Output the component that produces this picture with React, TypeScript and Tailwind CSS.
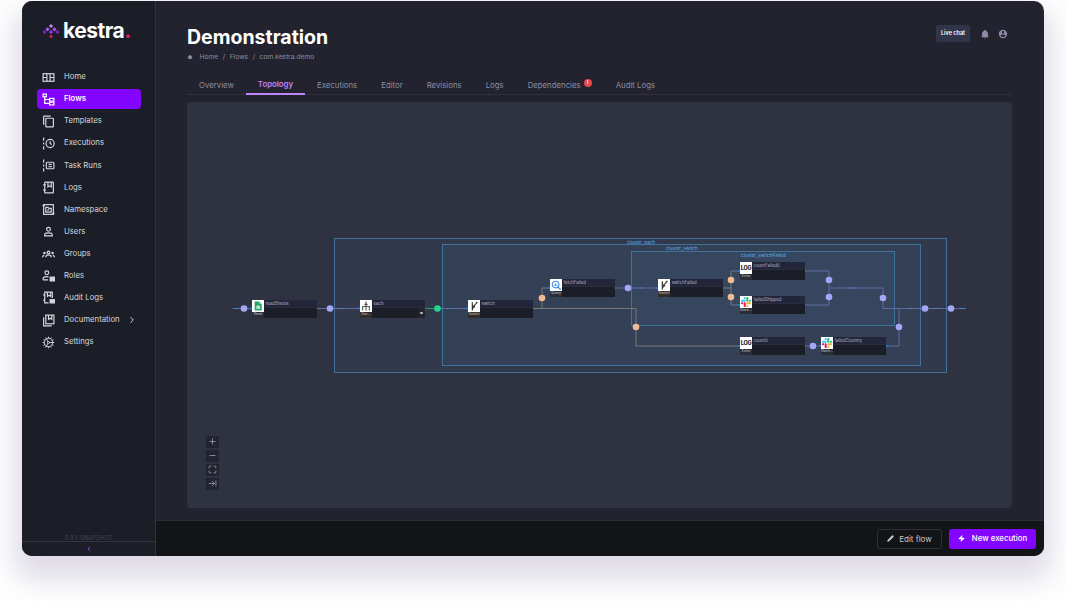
import { ChevronLeft, ChevronRight, Cog, Maximize, Minus, Plus, ArrowRightToLine, Pencil, Zap } from "lucide-react";
import type { ReactNode } from "react";

const Ico = ({ children }: { children: ReactNode }) => (
  <svg viewBox="0 0 24 24" className="h-[13px] w-[13px]" fill="none" stroke="currentColor" strokeWidth="2.2">
    {children}
  </svg>
);

const navItems: { label: string; icon: ReactNode; active?: boolean; arrow?: boolean }[] = [
  {
    label: "Home",
    icon: (
      <Ico>
        <rect x="2" y="5" width="20" height="14" />
        <path d="M9 5v14M15 5v14M15 12h7M2 12h7" />
      </Ico>
    ),
  },
  {
    label: "Flows",
    active: true,
    icon: (
      <Ico>
        <rect x="2" y="2" width="6" height="5" />
        <rect x="14" y="10" width="8" height="5" />
        <rect x="14" y="17" width="8" height="5" />
        <path d="M5 7v12h9M5 12h9" />
      </Ico>
    ),
  },
  {
    label: "Templates",
    icon: (
      <Ico>
        <path d="M16 2H4a1 1 0 0 0-1 1v15" />
        <rect x="7" y="6" width="14" height="16" rx="1" />
      </Ico>
    ),
  },
  {
    label: "Executions",
    icon: (
      <Ico>
        <circle cx="15" cy="12" r="7.5" />
        <path d="M15 8v4l3 2M3 1v6M3 10v4M3 17v6" />
      </Ico>
    ),
  },
  {
    label: "Task Runs",
    icon: (
      <Ico>
        <rect x="8" y="6" width="14" height="12" rx="2" />
        <path d="M12 10h6M12 14h6M3 1v6M3 10v4M3 17v6" />
      </Ico>
    ),
  },
  {
    label: "Logs",
    icon: (
      <Ico>
        <rect x="5" y="2" width="16" height="20" rx="1" />
        <path d="M11 2v9l3-2 3 2V2M2 7h5M2 17h5" />
      </Ico>
    ),
  },
  {
    label: "Namespace",
    icon: (
      <Ico>
        <rect x="3" y="3" width="18" height="18" />
        <path d="M7 8h4l2 2h4v7H7zM1 5h4M19 19h4M10 14l3-2" />
      </Ico>
    ),
  },
  {
    label: "Users",
    icon: (
      <Ico>
        <circle cx="12" cy="8" r="3.5" />
        <path d="M5 20v-2c0-2 3-3.500 7-3.500s7 1.500 7 3.500v2z" />
      </Ico>
    ),
  },
  {
    label: "Groups",
    icon: (
      <Ico>
        <circle cx="12" cy="10" r="2.500" />
        <path d="M7 19c0-3 2-4.500 5-4.500s5 1.500 5 4.500M1 19c0-2 1-3 3-4M23 19c0-2-1-3-3-4" />
        <circle cx="4.500" cy="11" r="1.200" />
        <circle cx="19.500" cy="11" r="1.200" />
      </Ico>
    ),
  },
  {
    label: "Roles",
    icon: (
      <Ico>
        <circle cx="9" cy="7" r="3.500" />
        <path d="M2 20v-2c0-2 3-4 7-4 1 0 2 0 3 1M2 20h9" />
        <rect x="15" y="15" width="8" height="7" fill="currentColor" />
      </Ico>
    ),
  },
  {
    label: "Audit Logs",
    icon: (
      <Ico>
        <path d="M12 22H5V2h14v11" />
        <path d="M10 2v8l3-2 3 2V2M2 7h3M2 17h3" />
        <rect x="15" y="16" width="8" height="6" fill="currentColor" />
      </Ico>
    ),
  },
  {
    label: "Documentation",
    arrow: true,
    icon: (
      <Ico>
        <rect x="7" y="2" width="15" height="16" />
        <path d="M3 6v16h15M12 2v8l3-2 3 2V2" />
      </Ico>
    ),
  },
  { label: "Settings", icon: <Cog size={13} strokeWidth={1.7} /> },
];

const tabs = ["Overview", "Topology", "Executions", "Editor", "Revisions", "Logs", "Dependencies", "Audit Logs"];

const clusters = [
  { label: "cluster_each", x: 334, y: 238, w: 613, h: 135, labelX: 627 },
  { label: "cluster_switch", x: 442, y: 244, w: 479, h: 122, labelX: 666 },
  { label: "cluster_switchFailed", x: 631, y: 251, w: 264, h: 75, labelX: 741 },
];

type NodeKind = "sheets" | "each" | "switch" | "query" | "log" | "slack";

const nodes: { label: string; tag: string; kind: NodeKind; x: number; y: number; warm?: boolean; more?: boolean }[] = [
  { label: "readSheets", tag: "Read", kind: "sheets", x: 252, y: 300 },
  { label: "each", tag: "Eac...", kind: "each", x: 360, y: 300, warm: true, more: true },
  { label: "switch", tag: "Switch", kind: "switch", x: 468, y: 300, warm: true },
  { label: "fetchFailed", tag: "Query", kind: "query", x: 550, y: 279 },
  { label: "switchFailed", tag: "Switch", kind: "switch", x: 658, y: 279, warm: true },
  { label: "countFailed0", tag: "Echo", kind: "log", x: 740, y: 262 },
  { label: "failedShipped", tag: "Slack...", kind: "slack", x: 740, y: 296 },
  { label: "count0", tag: "Echo", kind: "log", x: 740, y: 337 },
  { label: "failedCountry", tag: "Slack...", kind: "slack", x: 821, y: 337 },
];

const purple = [[244, 308.5], [330, 308.5], [628, 288], [813, 346], [829, 280], [829, 297], [883, 298], [899, 327], [925, 308.5], [951, 308.5]];
const orange = [[542, 298], [636, 327], [731, 280], [731, 297]];
const ticks = [[341, 308.5], [449, 308.5], [639, 288], [851, 288], [910, 308.5], [936, 308.5], [962, 308.5], [235, 308.5]];
const ports = [[251, 308.5], [317, 308.5], [359, 308.5], [425, 308.5], [467, 308.5], [549, 288], [615, 288], [657, 288], [723, 288], [739, 271], [805, 271], [739, 305], [805, 305], [739, 346], [805, 346], [820, 346], [887, 346]];

function NodeIcon({ kind }: { kind: NodeKind }) {
  if (kind === "log") {
    return <span className="text-[5.5px] font-extrabold tracking-tighter text-[#222]">LOG</span>;
  }
  if (kind === "slack") {
    return (
      <svg viewBox="0 0 122.800 122.800" className="h-[10px] w-[10px]">
        <path fill="#e01e5a" d="M25.800 77.600c0 7.100-5.800 12.900-12.900 12.900S0 84.700 0 77.600s5.800-12.900 12.900-12.900h12.900v12.900zM32.300 77.600c0-7.100 5.800-12.900 12.900-12.900s12.900 5.800 12.900 12.900v32.300c0 7.100-5.800 12.900-12.900 12.900s-12.900-5.800-12.900-12.900V77.600z" />
        <path fill="#36c5f0" d="M45.200 25.800c-7.100 0-12.900-5.800-12.900-12.900S38.100 0 45.200 0s12.900 5.800 12.900 12.900v12.900H45.200zM45.200 32.300c7.100 0 12.900 5.800 12.900 12.900s-5.800 12.900-12.900 12.900H12.900C5.800 58.100 0 52.300 0 45.200s5.800-12.900 12.900-12.900h32.300z" />
        <path fill="#2eb67d" d="M97 45.200c0-7.100 5.800-12.900 12.900-12.900s12.900 5.800 12.900 12.900-5.800 12.900-12.900 12.900H97V45.200zM90.500 45.200c0 7.100-5.800 12.900-12.900 12.900s-12.900-5.800-12.900-12.900V12.900C64.700 5.800 70.500 0 77.600 0s12.900 5.800 12.900 12.900v32.300z" />
        <path fill="#ecb22e" d="M77.600 97c7.100 0 12.900 5.800 12.900 12.900s-5.800 12.900-12.900 12.900-12.900-5.800-12.900-12.900V97h12.900zM77.600 90.500c-7.100 0-12.900-5.800-12.900-12.900s5.800-12.900 12.900-12.900h32.300c7.100 0 12.900 5.800 12.900 12.900s-5.800 12.900-12.900 12.900H77.600z" />
      </svg>
    );
  }
  return (
    <svg viewBox="0 0 24 24" className="h-[10px] w-[10px]">
      {kind === "sheets" && (
        <>
          <path d="M4 1h11l6 6v16H4z" fill="#23a566" />
          <path d="M15 1l6 6h-6z" fill="#8ed1b1" />
          <rect x="8" y="11" width="9" height="8" fill="#bfe6d2" />
        </>
      )}
      {kind === "each" && <path d="M12 1v22M4 23V13h16v10M8 8h8" stroke="#555" strokeWidth="2.6" fill="none" />}
      {kind === "switch" && <path d="M8 23V3M8 15c0-4 10-4 10-12M8 19c0-3 5-3 6-7M18 2l2 3" stroke="#333" strokeWidth="2.8" fill="none" />}
      {kind === "query" && (
        <>
          <circle cx="11" cy="11" r="8" stroke="#3b8be0" strokeWidth="2.6" fill="none" />
          <path d="M17 17l6 6" stroke="#3b8be0" strokeWidth="3" />
          <path d="M8 14v-3M11 14V8M14 14v-4" stroke="#3b8be0" strokeWidth="2" />
        </>
      )}
    </svg>
  );
}

function FlowNode({ node }: { node: (typeof nodes)[number] }) {
  return (
    <div
      className="absolute flex h-[17.5px] w-[65px] bg-[#1c1e27]"
      style={{ left: node.x - 187, top: node.y - 102 }}
    >
      <div className="flex w-[12px] flex-col">
        <div className="flex h-[11.5px] items-center justify-center bg-white">
          <NodeIcon kind={node.kind} />
        </div>
        <div className={`flex flex-1 items-center justify-center text-[3.5px] text-[#c7c9d4] ${node.warm ? "bg-[#342c28]" : "bg-[#2a2c36]"}`}>
          {node.tag}
        </div>
      </div>
      <div className="flex flex-1 flex-col">
        <div className="flex h-[8px] items-center border-b border-[#2a2c3c] bg-[#23253a] pt-px pl-[1.5px] text-[4.3px] leading-none text-[#b5b7c6]">
          {node.label}
        </div>
        {node.more && (
          <div className="flex flex-1 justify-end">
            <div className="flex w-[7px] items-center justify-center bg-[#23242c]">
              <div className="h-[2.5px] w-[2.5px] rounded-full bg-[#bbb]" />
            </div>
          </div>
        )}
      </div>
    </div>
  );
}

function Topology() {
  return (
    <div className="relative h-[406px] overflow-hidden rounded-[4px] bg-[#2f3241]">
      {clusters.map((c) => (
        <div
          key={c.label}
          className="absolute border border-[#3f7199] bg-[#4a7fb0]/10"
          style={{ left: c.x - 187, top: c.y - 102, width: c.w, height: c.h }}
        />
      ))}
      <svg className="absolute inset-0 h-full w-full" viewBox="187 102 825 406" fill="none">
        <g stroke="#6468a0" strokeWidth="1">
          <path d="M234 308.500H252M317 308.500H360M437 308.500H468M615 288H658M805 271H829V305H805M829 288H883V308.500M883 308.500H966M805 346H821M887 346H899V308.500" />
        </g>
        <path d="M425 308.500H437" stroke="#1f9a6b" strokeWidth="1" />
        <path d="M533 308.500H636V346H740M542 308.500V288H550M723 288H731M731 271V305M731 271H740M731 305H740" stroke="#7b7771" strokeWidth="1" />
        {ports.map(([x, y]) => (
          <rect key={`${x}-${y}`} x={x - 1} y={y - 1} width="2" height="2" fill="#1f6fe0" />
        ))}
        {ticks.map(([x, y]) => (
          <path key={`${x}-${y}`} d={`M${x - 2} ${y}h1.200M${x + 1} ${y}h1.200`} stroke="#3ea1d6" strokeWidth="1.100" />
        ))}
        {purple.map(([x, y]) => (
          <circle key={`${x}-${y}`} cx={x} cy={y} r="3.300" fill="#a5a6f6" />
        ))}
        {orange.map(([x, y]) => (
          <circle key={`${x}-${y}`} cx={x} cy={y} r="3.300" fill="#efbb92" />
        ))}
        <circle cx="437.500" cy="308.500" r="3.300" fill="#1fd78f" />
      </svg>
      {clusters.map((c) => (
        <span
          key={c.label}
          className="absolute text-[4.700px] leading-none whitespace-nowrap text-[#5ab0e8]"
          style={{ left: c.labelX - 187, top: c.y - 102 + 1.5 }}
        >
          {c.label}
        </span>
      ))}
      {nodes.map((n) => (
        <FlowNode key={n.label} node={n} />
      ))}
      <div className="absolute bottom-[18px] left-[19px] flex flex-col gap-[1.500px] text-[#a2a4b4]">
        {[Plus, Minus, Maximize, ArrowRightToLine].map((Icon, i) => (
          <div key={i} className="flex h-[12.500px] w-[12.500px] items-center justify-center bg-[#22242f]">
            <Icon size={9} strokeWidth={2} />
          </div>
        ))}
      </div>
    </div>
  );
}

export default function App() {
  return (
    <div className="h-[601px] w-[1066px] overflow-hidden bg-white pl-[22px] pt-px font-['Inter',sans-serif]">
      <div className="flex h-[555px] w-[1022px] overflow-hidden rounded-[10px] bg-[#22232f] shadow-[0_16px_30px_8px_rgba(90,70,130,0.2)]">
        <aside className="flex w-[134px] shrink-0 flex-col border-r border-[#33343f] bg-[#1c1e27]">
          <div className="flex h-[64px] items-start pl-[21px] pt-[15px]">
            <svg viewBox="0 0 16 16" className="mt-[7px] h-[16px] w-[16px]">
              <g fill="#a855f7">
                <rect x="6.500" y="1.500" width="3" height="3" transform="rotate(45 8 3)" fill="#c084fc" />
                <rect x="3" y="4.800" width="3" height="3" transform="rotate(45 4.500 6.300)" />
                <rect x="10" y="4.800" width="3" height="3" transform="rotate(45 11.500 6.300)" />
                <rect x="-0.200" y="7.600" width="3" height="3" transform="rotate(45 1.300 9.100)" fill="#7e22ce" />
                <rect x="6.500" y="7.600" width="3" height="3" transform="rotate(45 8 9.100)" fill="#9333ea" />
                <rect x="13" y="7.600" width="3" height="3" transform="rotate(45 14.500 9.100)" fill="#7e22ce" />
              </g>
              <circle cx="8" cy="13.500" r="1.600" fill="#e11d63" />
            </svg>
            <span className="ml-[4px] text-[21px] leading-[30px] font-bold tracking-[-0.5px] text-white">
              kestra<span className="text-[#e11d63]">.</span>
            </span>
          </div>
          <nav className="flex flex-col gap-[2.100px] pt-[2px] pr-[14px] pl-[15px]">
            {navItems.map((item) => (
              <div
                key={item.label}
                className={`flex h-5 items-center gap-[8px] rounded-[4px] pl-[5px] text-[7.75px] ${item.active ? "bg-[#8405ff] font-semibold text-white" : "text-[#d5d6dd]"}`}
              >
                <span className="flex w-[13px] justify-center">{item.icon}</span>
                <span className="ml-px">{item.label}</span>
                {item.arrow && <ChevronRight size={10} strokeWidth={2.4} className="-ml-[1px]" />}
              </div>
            ))}
          </nav>
          <div className="mt-auto text-center text-[6px] leading-[7px] text-[#44454f]">0.8.1-SNAPSHOT</div>
          <div className="flex h-[15px] items-center justify-center border-t border-[#33343f] text-[#8b3fe0]">
            <ChevronLeft size={8} strokeWidth={3} />
          </div>
        </aside>
        <main className="flex min-w-0 flex-1 flex-col">
          <div className="flex-1 pr-[32px] pl-[31px]">
            <div className="flex items-start justify-between pt-[23px]">
              <h1 className="text-[19.500px] leading-[26px] font-bold text-white">Demonstration</h1>
              <div className="mt-px mr-[4px] flex items-center">
                <span className="flex h-[17px] w-[34px] items-center justify-center rounded-[2px] bg-[#32344a] text-[5.500px] font-semibold whitespace-nowrap text-white">
                  Live chat
                </span>
                <svg viewBox="0 0 24 24" className="ml-[10px] h-[10px] w-[10px]" fill="#8f8aa8">
                  <path d="M21,19V20H3V19L5,17V11C5,7.900 7.030,5.170 10,4.290C10,4.190 10,4.100 10,4A2,2 0 0,1 12,2A2,2 0 0,1 14,4C14,4.100 14,4.190 14,4.290C16.970,5.170 19,7.900 19,11V17L21,19M14,21A2,2 0 0,1 12,23A2,2 0 0,1 10,21" />
                </svg>
                <svg viewBox="0 0 24 24" className="ml-[8px] h-[10px] w-[10px]" fill="#8f8aa8">
                  <path d="M12,19.200C9.500,19.200 7.290,17.920 6,16C6.030,14 10,12.900 12,12.900C14,12.900 17.970,14 18,16C16.710,17.920 14.500,19.200 12,19.200M12,5A3,3 0 0,1 15,8A3,3 0 0,1 12,11A3,3 0 0,1 9,8A3,3 0 0,1 12,5M12,2A10,10 0 0,0 2,12A10,10 0 0,0 12,22A10,10 0 0,0 22,12A10,10 0 0,0 12,2Z" />
                </svg>
              </div>
            </div>
            <div className="mt-[2px] flex items-center gap-[4.500px] text-[6.700px] leading-[10px] text-[#8c8da0]">
              <svg viewBox="0 0 24 24" className="mr-[2px] h-[6px] w-[6px]" fill="#8c8da0">
                <path d="M12 3L2 12h3v8h14v-8h3z" />
              </svg>
              <span>Home</span>
              <span>/</span>
              <span>Flows</span>
              <span>/</span>
              <span>com.kestra.demo</span>
            </div>
            <div className="mt-[12px] flex h-[21px] border-b border-[#2f303d]">
              {tabs.map((tab) => (
                <div
                  key={tab}
                  className={`relative flex h-[21px] items-center px-3 pt-[2px] text-[7.800px] ${tab === "Topology" ? "border-b-2 border-[#c084fc] font-semibold text-[#c084fc]" : "text-[#8c8da0]"} ${tab === "Dependencies" ? "mr-[11px]" : ""}`}
                >
                  {tab}
                  {tab === "Dependencies" && (
                    <span className="absolute top-[5px] right-[1px] flex h-[8px] w-[8px] items-center justify-center rounded-full bg-[#e5484d] text-[5px] font-bold text-white">
                      !
                    </span>
                  )}
                </div>
              ))}
            </div>
            <div className="mt-[7px]">
              <Topology />
            </div>
          </div>
          <footer className="flex h-[36px] items-center justify-end gap-[7px] border-t border-[#2c2d38] bg-[#131418] pr-[8px]">
            <button className="flex h-5 w-[65px] items-center justify-center gap-[5px] rounded-[3px] border border-[#2e2f3a] text-[8px] text-[#c4c5cf]">
              <Pencil size={7} fill="currentColor" />
              Edit flow
            </button>
            <button className="flex h-5 w-[87px] items-center justify-center gap-[7px] rounded-[3px] bg-[#8405ff] text-[7.800px] font-medium text-white">
              <Zap size={7} fill="currentColor" />
              New execution
            </button>
          </footer>
        </main>
      </div>
    </div>
  );
}
